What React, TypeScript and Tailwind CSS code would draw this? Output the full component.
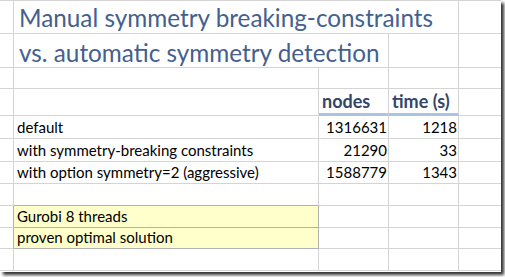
import React from 'react'

const line = 'border-[#d4d4d4]'

type Cell = { w: string; text?: string; cls?: string }

function Row({ h, cells }: { h: string; cells: Cell[] }) {
  return (
    <div className={`flex ${h}`}>
      {cells.map((c, i) => (
        <div key={i} className={`${c.w} shrink-0 border-r border-b ${line} flex items-end overflow-visible whitespace-nowrap ${c.cls ?? ''}`}>
          {c.text}
        </div>
      ))}
    </div>
  )
}

const data = [
  { label: 'default', nodes: '1316631', time: '1218' },
  { label: 'with symmetry-breaking constraints', nodes: '21290', time: '33' },
  { label: 'with option symmetry=2 (aggressive)', nodes: '1588779', time: '1343' },
]

export default function App() {
  const num = 'justify-end pr-[1px] pb-0'
  return (
    <div className="w-[505px] h-[277px] bg-white">
      <div
        className="w-[501px] h-[272px] overflow-hidden bg-white border-t border-[#d4d4d4] shadow-[3px_3px_3px_rgba(0,0,0,0.8)] text-[15px] text-black"
        style={{ fontFamily: 'Lato, "Open Sans", sans-serif' }}
      >
        {/* title rows */}
        <div className="flex h-[33px]">
          <div className={`w-[14px] shrink-0 border-r border-b ${line}`} />
          <div className={`w-[445px] shrink-0 border-r border-b ${line} flex items-end pl-[5px] pb-[3px] text-[24.3px] leading-none text-[#44608f] whitespace-nowrap`}>
            Manual symmetry breaking-constraints
          </div>
          <div className={`w-[42px] shrink-0 border-b ${line}`} />
        </div>
        <div className="flex h-[34px]">
          <div className={`w-[14px] shrink-0 border-r border-b ${line}`} />
          <div className={`w-[375px] shrink-0 border-r border-b ${line} flex items-end pl-[5px] pb-[2px] text-[24.3px] leading-none text-[#44608f] whitespace-nowrap`}>
            vs. automatic symmetry detection
          </div>
          <div className={`w-[70px] shrink-0 border-r border-b ${line}`} />
          <div className={`w-[42px] shrink-0 border-b ${line}`} />
        </div>
        <Row h="h-[21px]" cells={[{ w: 'w-[14px]' }, { w: 'w-[305px]' }, { w: 'w-[70px]' }, { w: 'w-[70px]' }, { w: 'w-[42px] !border-r-0' }]} />
        {/* header row */}
        <div className="flex h-[27px]">
          <div className={`w-[14px] shrink-0 border-r border-b ${line}`} />
          <div className={`w-[305px] shrink-0 border-r border-b ${line}`} />
          <div className={`w-[70px] shrink-0 border-r ${line} border-b-[3px] border-b-[#a9c5e3] flex items-end pl-[3px] pb-0 text-[18px] leading-[24px] font-bold text-[#34456a]`}>
            nodes
          </div>
          <div className={`w-[70px] shrink-0 border-r ${line} border-b-[3px] border-b-[#a9c5e3] flex items-end pl-[3px] pb-0 text-[18px] leading-[24px] font-bold text-[#34456a] whitespace-nowrap`}>
            time (s)
          </div>
          <div className={`w-[42px] shrink-0 border-b ${line}`} />
        </div>
        {data.map((d, i) => (
          <Row
            key={d.label}
            h={i < 2 ? 'h-[23px]' : 'h-[22px]'}
            cells={[
              { w: 'w-[14px]' },
              { w: 'w-[305px]', text: d.label, cls: 'pl-[3px] pb-0' },
              { w: 'w-[70px]', text: d.nodes, cls: num },
              { w: 'w-[70px]', text: d.time, cls: num },
              { w: 'w-[42px] !border-r-0' },
            ]}
          />
        ))}
        <Row h="h-[22px]" cells={[{ w: 'w-[14px]' }, { w: 'w-[305px] !border-b-[#b2b2b2]' }, { w: 'w-[70px]' }, { w: 'w-[70px]' }, { w: 'w-[42px] !border-r-0' }]} />
        {/* yellow note cells */}
        {['Gurobi 8 threads', 'proven optimal solution'].map((t, i) => (
          <div key={t} className={`flex ${i === 0 ? 'h-[22px]' : 'h-[21px]'}`}>
            <div className={`w-[14px] shrink-0 border-r border-b ${line} !border-r-[#b2b2b2]`} />
            <div className="w-[305px] shrink-0 border-r border-b border-[#b2b2b2] bg-[#ffffcc] flex items-end pl-[3px] pb-0 whitespace-nowrap">
              {t}
            </div>
            <div className={`w-[70px] shrink-0 border-r border-b ${line}`} />
            <div className={`w-[70px] shrink-0 border-r border-b ${line}`} />
            <div className={`w-[42px] shrink-0 border-b ${line}`} />
          </div>
        ))}
        <Row h="h-[22px]" cells={[{ w: 'w-[14px]' }, { w: 'w-[305px]' }, { w: 'w-[70px]' }, { w: 'w-[70px]' }, { w: 'w-[42px] !border-r-0' }]} />
      </div>
    </div>
  )
}
